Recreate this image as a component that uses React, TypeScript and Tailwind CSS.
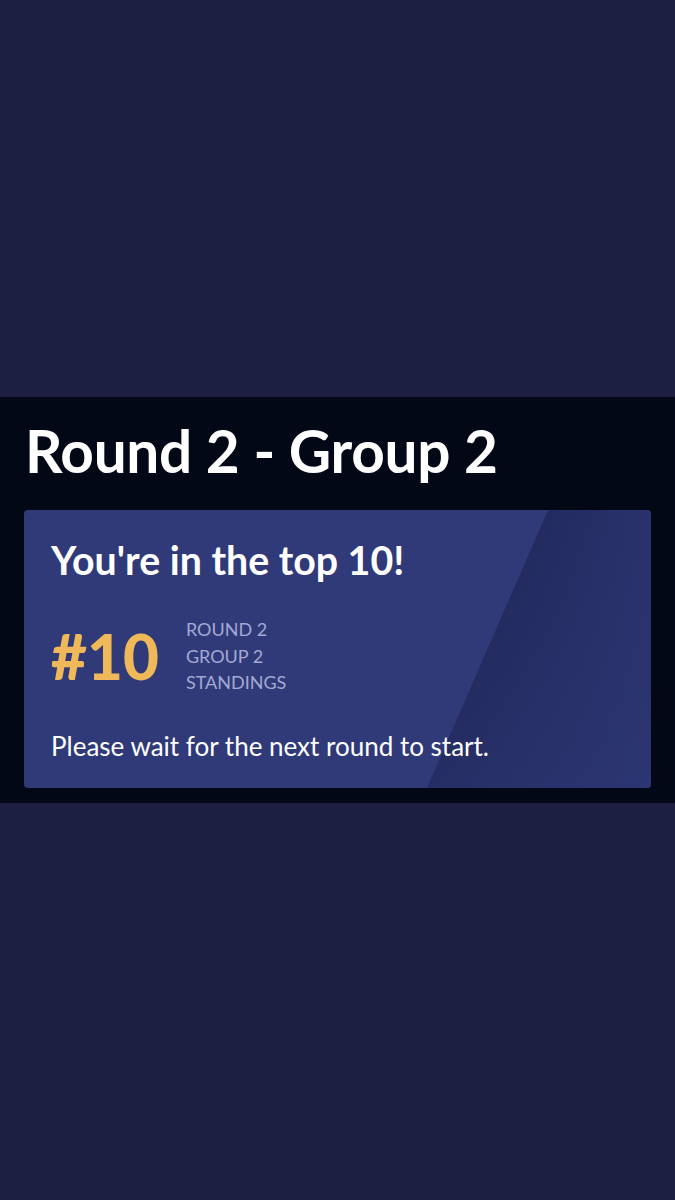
export default function App() {
  return (
    <div
      className="flex h-screen w-full items-center bg-[#1c1f3f] text-white"
      style={{ fontFamily: 'Lato, "Noto Sans", sans-serif' }}
    >
      <section className="w-full bg-[#030817] px-6 pb-[15px] pt-[20px]">
        <h1 className="pl-[1px] text-[58.5px] font-bold leading-[66px] tracking-[-0.3px]">
          Round 2 - Group 2
        </h1>
        <div className="relative mt-[27px] h-[278px] overflow-hidden rounded-[4px] bg-[#303a78]">
          <div className="absolute inset-y-0 left-[403px] right-0 bg-linear-to-r from-[#1c2352] to-[#29326c] [clip-path:polygon(121px_0,100%_0,100%_100%,0_100%)]">
            <div className="h-full w-full bg-linear-to-b from-transparent to-[#2f3978]/50" />
          </div>
          <div className="relative px-[27px] pt-[26px]">
            <h2 className="text-[39.3px] font-bold leading-[48px]">You're in the top 10!</h2>
            <div className="mt-[32px] flex items-center gap-[27px]">
              <span className="text-[62px] font-black leading-[64px] text-[#efb95a]">#10</span>
              <div className="flex flex-col text-[18px] leading-[26.5px] text-[#a3a9d4]">
                <span>ROUND 2</span>
                <span>GROUP 2</span>
                <span>STANDINGS</span>
              </div>
            </div>
            <p className="mt-[34px] text-[26px] leading-[32px]">
              Please wait for the next round to start.
            </p>
          </div>
        </div>
      </section>
    </div>
  )
}
